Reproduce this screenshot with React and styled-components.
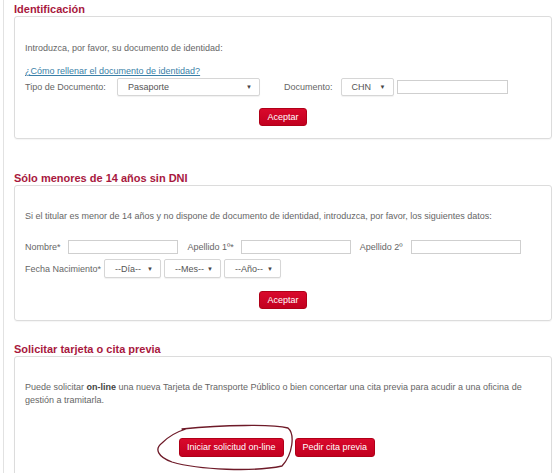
import React from 'react';
import styled, { createGlobalStyle } from 'styled-components';

const GlobalStyle = createGlobalStyle`
  html, body {
    margin: 0;
    padding: 0;
    background: #fff;
    font-family: "Liberation Sans", Arial, sans-serif;
    overflow: hidden;
  }
`;

const Page = styled.div`
  margin-left: 3px;
  width: 538px;
  min-height: 473px;
  padding: 3px 10px 0 10px;
  border-left: 1px solid #e2e2e2;
  border-right: 1px solid #e2e2e2;
`;

const Section = styled.section`
  margin-bottom: ${(p) => p.$gap || 0}px;
`;

const Title = styled.h2`
  margin: 0;
  font-size: 11px;
  line-height: 13px;
  font-weight: bold;
  color: #a8183e;
`;

const Box = styled.div`
  border: 1px solid #dcdcdc;
  border-radius: 3px;
  padding: 0 10px ${(p) => p.$bottom ?? 11}px 10px;
  box-shadow: 0 1px 1px rgba(0, 0, 0, 0.04);
`;

const Text = styled.p`
  margin: ${(p) => p.$top || 24}px 0 0 0;
  font-size: 9px;
  line-height: ${(p) => p.$lh || 12}px;
  color: #666;

  b {
    color: #444;
  }
`;

const Link = styled.a`
  display: block;
  margin-top: 11px;
  font-size: 9px;
  line-height: 12px;
  color: #3a7fa8;
  text-decoration: underline;
`;

const Row = styled.div`
  display: flex;
  align-items: center;
  margin-top: ${(p) => p.$top || 0}px;
  font-size: 9px;
  color: #666;
`;

const Label = styled.span`
  flex: none;
  width: ${(p) => (p.$width ? `${p.$width}px` : 'auto')};
  margin-right: ${(p) => p.$gap || 0}px;
  margin-left: ${(p) => p.$left || 0}px;
`;

const Select = styled.div`
  flex: none;
  box-sizing: border-box;
  display: flex;
  align-items: center;
  justify-content: space-between;
  width: ${(p) => p.$width}px;
  height: ${(p) => p.$height || 18}px;
  margin-right: ${(p) => p.$gap || 0}px;
  padding: 0 7px 0 10px;
  border: 1px solid #d6d6d6;
  border-radius: 2px;
  background: #fff;
  box-shadow: 0 1px 1px rgba(0, 0, 0, 0.06);
  font-size: 9px;
  color: #555;
`;

const Arrow = styled.span`
  font-size: 6px;
  color: #444;
`;

const Input = styled.div`
  flex: none;
  box-sizing: border-box;
  width: ${(p) => p.$width}px;
  height: 14px;
  margin-right: ${(p) => p.$gap || 0}px;
  border: 1px solid #cfcfcf;
  background: #fff;
`;

const Actions = styled.div`
  display: flex;
  justify-content: center;
  gap: 11px;
  margin-top: ${(p) => p.$top || 0}px;
  padding-right: ${(p) => p.$shift || 0}px;
`;

const Button = styled.button`
  box-sizing: border-box;
  height: ${(p) => p.$height || 18}px;
  padding: 0 7px;
  border: 1px solid #b00018;
  border-radius: 3px;
  background: linear-gradient(#d9092c, #c2001f);
  color: #fff;
  font-family: "Liberation Sans", Arial, sans-serif;
  font-size: 9px;
  line-height: 1;
  cursor: pointer;
`;

const Marked = styled.span`
  position: relative;
  display: inline-flex;
`;

const Scribble = styled.svg`
  position: absolute;
  left: -25px;
  top: -14px;
  overflow: visible;
  pointer-events: none;
`;

const Option = ({ width, height, gap, children }) => (
  <Select $width={width} $height={height} $gap={gap}>
    <span>{children}</span>
    <Arrow>▼</Arrow>
  </Select>
);

export default function App() {
  return (
    <Page>
      <GlobalStyle />

      <Section $gap={33}>
        <Title>Identificación</Title>
        <Box $bottom={12}>
          <Text $top={25}>Introduzca, por favor, su documento de identidad:</Text>
          <Link href="#">¿Cómo rellenar el documento de identidad?</Link>
          <Row $top={1}>
            <Label $width={92}>Tipo de Documento:</Label>
            <Option width={143}>Pasaporte</Option>
            <Label $left={24} $gap={8}>Documento:</Label>
            <Option width={53} gap={3}>CHN</Option>
            <Input $width={111} />
          </Row>
          <Actions $top={12}>
            <Button>Aceptar</Button>
          </Actions>
        </Box>
      </Section>

      <Section $gap={22}>
        <Title>Sólo menores de 14 años sin DNI</Title>
        <Box>
          <Text>
            Si el titular es menor de 14 años y no dispone de documento de identidad,
            introduzca, por favor, los siguientes datos:
          </Text>
          <Row $top={18}>
            <Label $gap={7}>Nombre*</Label>
            <Input $width={110} $gap={10} />
            <Label $gap={7}>Apellido 1º*</Label>
            <Input $width={110} $gap={9} />
            <Label $gap={8}>Apellido 2º</Label>
            <Input $width={110} />
          </Row>
          <Row $top={5}>
            <Label $gap={3}>Fecha Nacimiento*</Label>
            <Option width={57} height={19} gap={3}>--Día--</Option>
            <Option width={57} height={19} gap={3}>--Mes--</Option>
            <Option width={57} height={19}>--Año--</Option>
          </Row>
          <Actions $top={13}>
            <Button>Aceptar</Button>
          </Actions>
        </Box>
      </Section>

      <Section>
        <Title>Solicitar tarjeta o cita previa</Title>
        <Box $bottom={30}>
          <Text $lh={13}>
            Puede solicitar <b>on-line</b> una nueva Tarjeta de Transporte Público o bien
            concertar una cita previa para acudir a una oficina de gestión a tramitarla.
          </Text>
          <Actions $top={31} $shift={12}>
            <Marked>
              <Button $height={19}>Iniciar solicitud on-line</Button>
              <Scribble width="140" height="48" viewBox="0 0 140 48">
                <path
                  d="M 28 5 C 70 1, 118 0, 134 4 C 141 10, 139 30, 128 42 C 100 48, 45 46, 18 38 C 4 33, 0 25, 8 19 C 14 13, 22 8, 32 5"
                  fill="none"
                  stroke="#6e1a28"
                  strokeWidth="1.3"
                  strokeLinecap="round"
                />
              </Scribble>
            </Marked>
            <Button $height={19}>Pedir cita previa</Button>
          </Actions>
        </Box>
      </Section>
    </Page>
  );
}
